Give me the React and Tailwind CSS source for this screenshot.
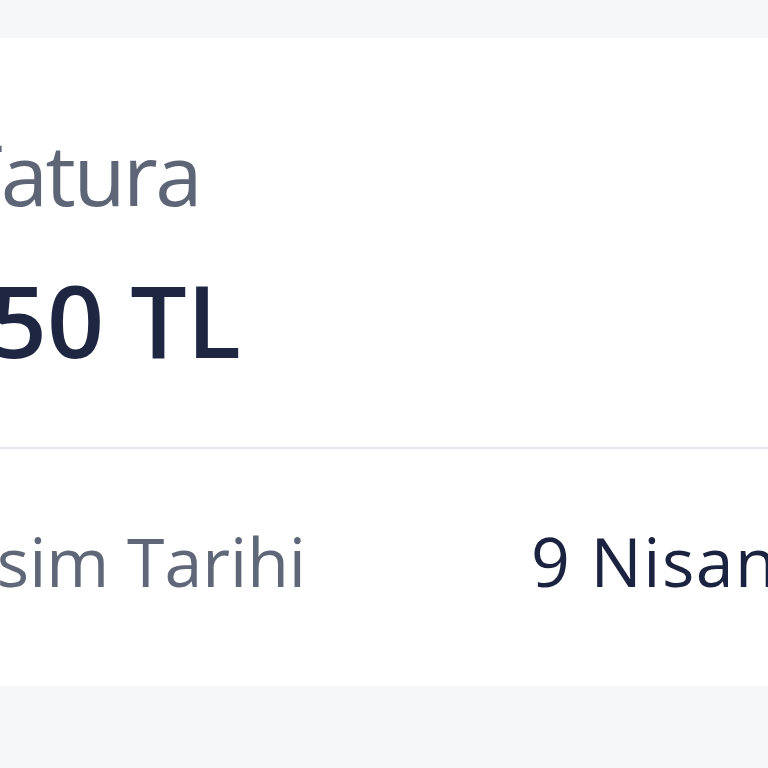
export default function App() {
  return (
    <div className="h-[768px] w-[768px] overflow-hidden bg-[#f6f7f9] pt-[38px] font-['Open_Sans','Lato',sans-serif]">
      <div className="h-[648px] w-[1300px] -ml-[300px] bg-white pt-[93px]">
        <p className="w-[500px] whitespace-nowrap text-right text-[85px] leading-none tracking-[-2.5px] text-[#5d6577]">Fatura</p>
        <p className="mt-[53px] w-[541px] whitespace-nowrap text-right text-[100px] font-semibold leading-none text-[#1e2642]">1.250 TL</p>
        <div className="mt-[78px] h-[2px] bg-[#e4e6ee]" />
        <div className="mt-[78px] flex whitespace-nowrap text-[68px] leading-none">
          <p className="w-[606px] shrink-0 text-right text-[#5f6778]">Kesim Tarihi</p>
          <p className="ml-[225px] tracking-[1.5px] text-[#1c2340]">9 Nisan 2024</p>
        </div>
      </div>
    </div>
  );
}
